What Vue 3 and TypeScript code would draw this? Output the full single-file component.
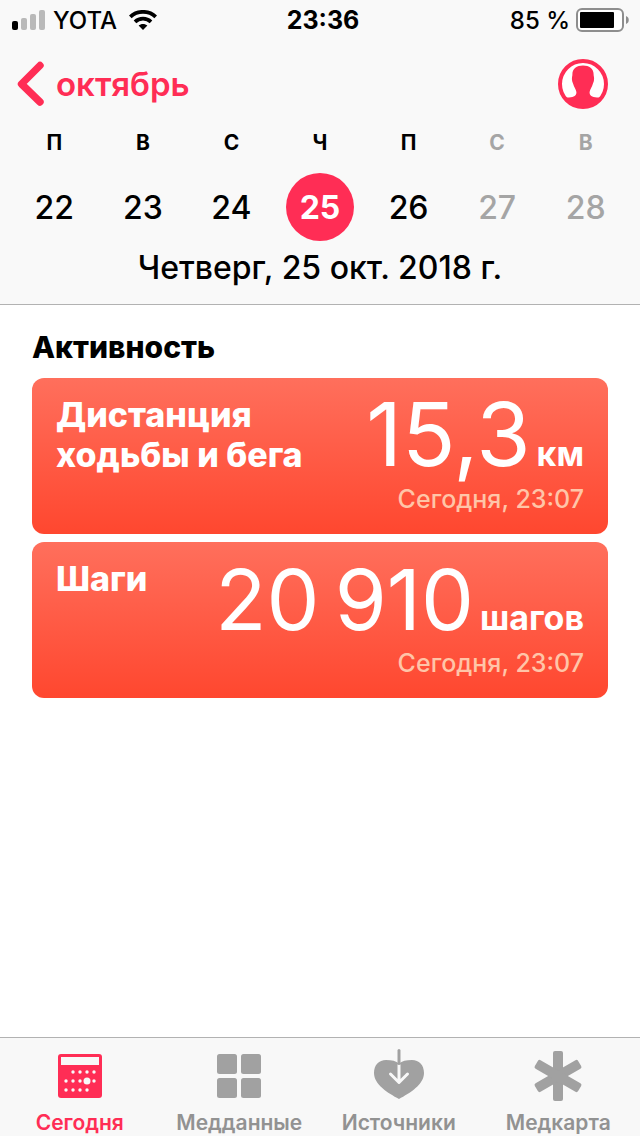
<script setup lang="ts">
import { ref } from 'vue'

interface Day {
  letter: string
  date: number
  future: boolean
}

interface Metric {
  name: string[]
  value: string
  unit: string
  time: string
}

type TabId = 'today' | 'data' | 'sources' | 'record'

const days: Day[] = [
  { letter: 'П', date: 22, future: false },
  { letter: 'В', date: 23, future: false },
  { letter: 'С', date: 24, future: false },
  { letter: 'Ч', date: 25, future: false },
  { letter: 'П', date: 26, future: false },
  { letter: 'С', date: 27, future: true },
  { letter: 'В', date: 28, future: true },
]

const metrics: Metric[] = [
  { name: ['Дистанция', 'ходьбы и бега'], value: '15,3', unit: 'км', time: 'Сегодня, 23:07' },
  { name: ['Шаги'], value: '20\u2009910', unit: 'шагов', time: 'Сегодня, 23:07' },
]

const tabs: { id: TabId; label: string }[] = [
  { id: 'today', label: 'Сегодня' },
  { id: 'data', label: 'Медданные' },
  { id: 'sources', label: 'Источники' },
  { id: 'record', label: 'Медкарта' },
]

const selectedDate = ref(25)
const activeTab = ref<TabId>('today')
</script>

<template>
  <div class="screen">
    <header class="header">
      <div class="status">
        <div class="status-left">
          <svg width="34" height="20" viewBox="0 0 34 20" aria-hidden="true">
            <rect x="0" y="11" width="6" height="9" rx="2" fill="#000" />
            <rect x="9" y="8" width="6" height="12" rx="2" fill="#b9b9b9" />
            <rect x="18" y="4" width="6" height="16" rx="2" fill="#b9b9b9" />
            <rect x="27" y="0" width="6" height="20" rx="2" fill="#b9b9b9" />
          </svg>
          <span class="carrier">YOTA</span>
          <svg class="wifi" width="28" height="20" viewBox="0 0 28 20" aria-hidden="true">
            <g fill="none" stroke="#000" stroke-width="3.8">
              <path d="M1.3 6.8C8.2 0.2 19.8 0.2 26.7 6.8" />
              <path d="M6 11.8C10.5 7.6 17.5 7.6 22 11.8" />
            </g>
            <path d="M9.6 15.6C12 13.5 16 13.5 18.4 15.6L14 20Z" fill="#000" />
          </svg>
        </div>
        <time class="clock">23:36</time>
        <div class="status-right">
          <span>85 %</span>
          <svg width="54" height="24" viewBox="0 0 54 24" aria-hidden="true">
            <rect x="1" y="1" width="46" height="22" rx="5" fill="#fff" stroke="#8e8e8e" stroke-width="2" />
            <rect x="4" y="4" width="34" height="16" rx="1" fill="#000" />
            <path d="M50 8C53.7 9.2 53.7 14.8 50 16Z" fill="#8e8e8e" />
          </svg>
        </div>
      </div>

      <nav class="nav">
        <button type="button" class="back">
          <svg width="28" height="46" viewBox="0 0 28 46" aria-hidden="true">
            <path d="M24 4.5L5.5 23L24 41" fill="none" stroke="#ff2d55" stroke-width="7.4" stroke-linecap="round" stroke-linejoin="round" />
          </svg>
          <span>октябрь</span>
        </button>
        <button type="button" class="profile" aria-label="Профиль">
          <svg width="50" height="50" viewBox="0 0 50 50" aria-hidden="true">
            <circle cx="25" cy="25" r="23" fill="#fff" stroke="#ff2d55" stroke-width="4" />
            <path d="M25 6.5C31.5 6.5 36 10 35.6 16C36 18 36.2 19 36 21C35.8 23 35.2 23.5 34.8 25C34.2 28 32 30 31.6 33C31.4 36.5 33.5 38 39 38.4L44 38.5C36 52.5 14 52.5 6 38.5L11 38.4C16.5 38 18.6 36.5 18.4 33C18 30 15.8 28 15.2 25C14.8 23.5 14.2 23 14 21C13.8 19 14 18 14.4 16C14 10 18.5 6.5 25 6.5Z" fill="#ff2d55" />
          </svg>
        </button>
      </nav>

      <div class="week">
        <button
          v-for="day in days"
          :key="day.date"
          type="button"
          class="day"
          :class="{ future: day.future, selected: day.date === selectedDate }"
          @click="selectedDate = day.date"
        >
          <span class="letter">{{ day.letter }}</span>
          <span class="date">{{ day.date }}</span>
        </button>
      </div>

      <h1 class="title">Четверг, 25 окт. 2018 г.</h1>
    </header>

    <main class="content">
      <h2 class="section">Активность</h2>
      <article v-for="metric in metrics" :key="metric.unit" class="card">
        <h3 class="name">
          <span v-for="line in metric.name" :key="line">{{ line }}</span>
        </h3>
        <div class="reading">
          <p class="amount">
            <span class="value" :class="{ long: metric.value.length > 4 }">{{ metric.value }}</span>
            <span class="unit">{{ metric.unit }}</span>
          </p>
          <p class="time">{{ metric.time }}</p>
        </div>
      </article>
    </main>

    <nav class="tabs">
      <button
        v-for="tab in tabs"
        :key="tab.id"
        type="button"
        class="tab"
        :class="{ active: tab.id === activeTab }"
        @click="activeTab = tab.id"
      >
        <svg width="52" height="52" viewBox="0 0 52 52" aria-hidden="true">
          <template v-if="tab.id === 'today'">
            <rect x="4" y="5" width="44" height="44" rx="3" fill="currentColor" />
            <path d="M7 8H45V16H7Z" fill="#f8f8f8" />
            <g fill="#f8f8f8">
              <circle cx="19" cy="23" r="1.7" /><circle cx="26" cy="23" r="1.7" /><circle cx="33" cy="23" r="1.7" /><circle cx="40" cy="23" r="1.7" />
              <circle cx="12" cy="32" r="1.7" /><circle cx="19" cy="32" r="1.7" /><circle cx="26" cy="32" r="1.7" /><circle cx="33" cy="32" r="3.5" /><circle cx="40" cy="32" r="1.7" />
              <circle cx="12" cy="41" r="1.7" /><circle cx="19" cy="41" r="1.7" /><circle cx="26" cy="41" r="1.7" /><circle cx="33" cy="41" r="1.7" />
            </g>
          </template>
          <g v-else-if="tab.id === 'data'" fill="#a1a1a1">
            <rect x="4" y="5" width="20" height="20" rx="2.5" />
            <rect x="28" y="5" width="20" height="20" rx="2.5" />
            <rect x="4" y="29" width="20" height="20" rx="2.5" />
            <rect x="28" y="29" width="20" height="20" rx="2.5" />
          </g>
          <template v-else-if="tab.id === 'sources'">
            <path d="M26 50C15 44 1 35.5 1 24C1 16 6 11 13 11C19 11 23 12 26 14.5C29 12 33 11 39 11C46 11 51 16 51 24C51 35.5 37 44 26 50Z" fill="#a1a1a1" />
            <path d="M26 16V33M17.5 25L26 33.5L34.5 25" fill="none" stroke="#f8f8f8" stroke-width="3" stroke-linecap="round" stroke-linejoin="round" />
            <path d="M26 1.5V14.5" fill="none" stroke="#a1a1a1" stroke-width="3" stroke-linecap="round" />
          </template>
          <g v-else fill="#a1a1a1">
            <rect x="21" y="2" width="10" height="50" rx="2" />
            <rect x="21" y="2" width="10" height="50" rx="2" transform="rotate(60 26 27)" />
            <rect x="21" y="2" width="10" height="50" rx="2" transform="rotate(-60 26 27)" />
          </g>
        </svg>
        <span>{{ tab.label }}</span>
      </button>
    </nav>
  </div>
</template>

<style>
body {
  margin: 0;
  background: #fff;
}
</style>

<style scoped>
.screen {
  display: flex;
  flex-direction: column;
  min-height: 100vh;
  color: #000;
  font-family: Inter, "Liberation Sans", sans-serif;
}

h1,
h2,
h3,
p {
  margin: 0;
}

button {
  margin: 0;
  padding: 0;
  border: 0;
  background: none;
  color: inherit;
  font: inherit;
  cursor: pointer;
}

svg {
  display: block;
  flex: none;
}

.header {
  background: #f9f9f9;
  border-bottom: 1px solid #b2b2b2;
}

.status {
  display: grid;
  grid-template-columns: 1fr auto 1fr;
  align-items: center;
  height: 40px;
  padding: 0 10px 0 12px;
  font-size: 24px;
  font-weight: 500;
}

.status-left,
.status-right {
  display: flex;
  align-items: center;
}

.status-left {
  gap: 7px;
}

.wifi {
  margin-left: 5px;
}

.status-right {
  justify-content: flex-end;
  gap: 6px;
}

.clock {
  padding-left: 4px;
  font-size: 25px;
  font-weight: 700;
}

.nav {
  display: flex;
  align-items: center;
  justify-content: space-between;
  height: 88px;
  padding: 0 32px 0 16px;
}

.back {
  display: flex;
  align-items: center;
  gap: 12px;
  color: #ff2d55;
  font-size: 33px;
  font-weight: 600;
}

.week {
  display: grid;
  grid-template-columns: repeat(7, 1fr);
  padding: 0 10px;
}

.day {
  display: flex;
  flex-direction: column;
  align-items: center;
  gap: 15px;
}

.letter {
  font-size: 21px;
  line-height: 30px;
  font-weight: 700;
}

.date {
  width: 68px;
  padding-top: 2px;
  border-radius: 34px;
  font-size: 32px;
  line-height: 66px;
  font-weight: 500;
}

.future {
  color: #a5a5a5;
}

.selected .date {
  background: #ff2d55;
  color: #fff;
  font-weight: 700;
}

.title {
  padding: 7px 0 16px;
  font-size: 32px;
  line-height: 40px;
  font-weight: 500;
  text-align: center;
}

.content {
  display: flex;
  flex: 1;
  flex-direction: column;
  gap: 8px;
  padding: 21px 32px;
}

.section {
  padding-bottom: 2px;
  font-size: 30px;
  line-height: 42px;
  font-weight: 800;
}

.card {
  display: flex;
  justify-content: space-between;
  padding: 12px 24px 17px;
  border-radius: 12px;
  background: linear-gradient(#ff6f5c, #ff472f);
  color: #fff;
}

.name {
  padding-top: 5px;
  font-size: 34px;
  line-height: 40px;
  font-weight: 800;
}

.name span {
  display: block;
}

.reading {
  text-align: right;
  white-space: nowrap;
}

.amount {
  font-size: 88px;
  line-height: 88px;
}

.value {
  font-weight: 400;
  line-height: 1;
}

.long {
  font-size: 84px;
}

.unit {
  margin-left: 6px;
  font-size: 34px;
  line-height: 1;
  font-weight: 700;
}

.time {
  padding-top: 3px;
  color: #ffc5a8;
  font-size: 25px;
  line-height: 36px;
  font-weight: 500;
}

.tabs {
  display: grid;
  grid-template-columns: repeat(4, 1fr);
  padding-right: 2px;
  background: #f8f8f8;
  border-top: 1px solid #b2b2b2;
}

.tab {
  display: flex;
  flex-direction: column;
  align-items: center;
  gap: 9px;
  padding-top: 11px;
  color: #929292;
  font-size: 21px;
  line-height: 26px;
  font-weight: 600;
}

.active {
  color: #ff2d55;
}
</style>
